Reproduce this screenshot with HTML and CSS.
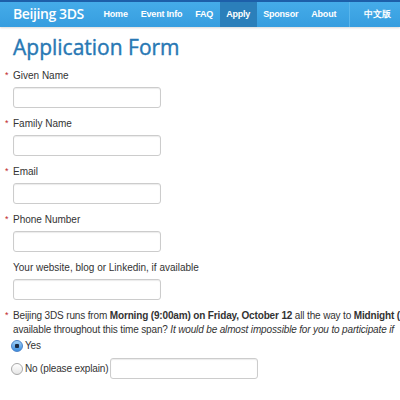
FILE: index.html
```html
<!DOCTYPE html>
<html>
<head>
<meta charset="utf-8">
<link rel="stylesheet" href="styles.css">
</head>
<body>
<div class="navbar">
  <div class="brand">Beijing 3DS</div>
  <ul class="nav">
    <li><a>Home</a></li>
    <li><a>Event Info</a></li>
    <li><a>FAQ</a></li>
    <li class="active"><a>Apply</a></li>
    <li><a>Sponsor</a></li>
    <li><a>About</a></li>
    <li class="lang"><a>中文版</a></li>
  </ul>
</div>
<div class="page">
  <h1 class="title">Application Form</h1>
  <div class="field"><label class="req">Given Name</label><input class="text" type="text"></div>
  <div class="field"><label class="req">Family Name</label><input class="text" type="text"></div>
  <div class="field"><label class="req">Email</label><input class="text" type="text"></div>
  <div class="field"><label class="req">Phone Number</label><input class="text" type="text"></div>
  <div class="field"><label>Your website, blog or Linkedin, if available</label><input class="text" type="text"></div>
  <div class="question">
    <p class="req q"><span class="line">Beijing 3DS runs from <b>Morning (9:00am) on Friday, October 12</b> all the way to <b>Midnight (</b></span><span class="line">available throughout this time span? <i>It would be almost impossible for you to participate if</i></span></p>
    <div class="opt first"><span class="radio checked"></span><span>Yes</span></div>
    <div class="opt second"><span class="radio"></span><span>No (please explain)</span><input class="text explain" type="text"></div>
  </div>
</div>
</body>
</html>
```
FILE: styles.css
```css
html, body { margin: 0; padding: 0; overflow: hidden; background: #fff; }
body { width: 400px; height: 400px; font-family: "Liberation Sans", Arial, sans-serif; font-size: 10px; color: #333; }
.navbar {
  height: 27px;
  box-sizing: border-box;
  border-top: 2px solid #1d5fa9;
  background: linear-gradient(#45ace9, #369ddf);
  box-shadow: 0 1px 2px rgba(0,0,0,0.15);
  display: flex;
  align-items: stretch;
  white-space: nowrap;
  overflow: hidden;
}
.brand {
  font-family: "Open Sans", sans-serif;
  font-size: 14px;
  font-weight: 600;
  letter-spacing: -0.4px;
  color: #fff;
  padding-left: 13px;
  width: 84px;
  flex: none;
  line-height: 24px;
}
.nav { list-style: none; margin: 0; padding: 0; display: flex; }
.nav li { display: flex; }
.nav a {
  display: block;
  color: #fff;
  font-weight: bold;
  font-size: 9px;
  letter-spacing: -0.2px;
  line-height: 24px;
  padding: 0 6.5px;
}
.nav li.active a { background: #2b7fba; }
.nav li.lang { margin-left: 6px; border-left: 1px solid #5ab6ec; }
.nav li.lang a { padding: 0 14px; font-size: 8.5px; letter-spacing: 0; }
.page { padding: 0 0 0 13px; }
.title {
  margin: 6px 0 8px;
  font-family: "Open Sans", sans-serif;
  font-weight: 400;
  font-size: 21px;
  line-height: 28px;
  color: #2878b4;
  -webkit-text-stroke: 0.4px #2878b4;
}
.field { display: flex; flex-direction: column; align-items: flex-start; margin-bottom: 9px; }
.field label { line-height: 14px; margin-bottom: 4px; }
.req { position: relative; }
.req::before {
  content: "*";
  position: absolute;
  left: -8px;
  top: -1px;
  color: #c0282d;
  font-size: 9px;
}
.text {
  box-sizing: border-box;
  width: 148px;
  height: 21px;
  margin: 0;
  border: 1px solid #ccc;
  border-radius: 3px;
  box-shadow: inset 0 1px 1px rgba(0,0,0,0.08);
  background: #fff;
  padding: 2px 4px;
}
.question { margin-top: 1px; }
.q { margin: 0; line-height: 14px; letter-spacing: -0.15px; }
.line { display: block; white-space: nowrap; }
.opt { display: flex; align-items: center; gap: 2px; letter-spacing: -0.15px; }
.opt.first { height: 17px; }
.opt.second { height: 23px; margin-top: 3px; }
.radio {
  box-sizing: border-box;
  width: 12px; height: 12px;
  border-radius: 50%;
  border: 1px solid #a8a8a8;
  background: linear-gradient(#fff, #e6e6e6);
  margin-left: -2px;
  flex: none;
}
.radio.checked {
  border-color: #4a82c8;
  background: radial-gradient(circle at 50% 50%, #1a2b44 0 2px, transparent 2.5px), linear-gradient(#9fd0f7, #3d8ee0);
}
.explain { margin-left: 0; }
```
